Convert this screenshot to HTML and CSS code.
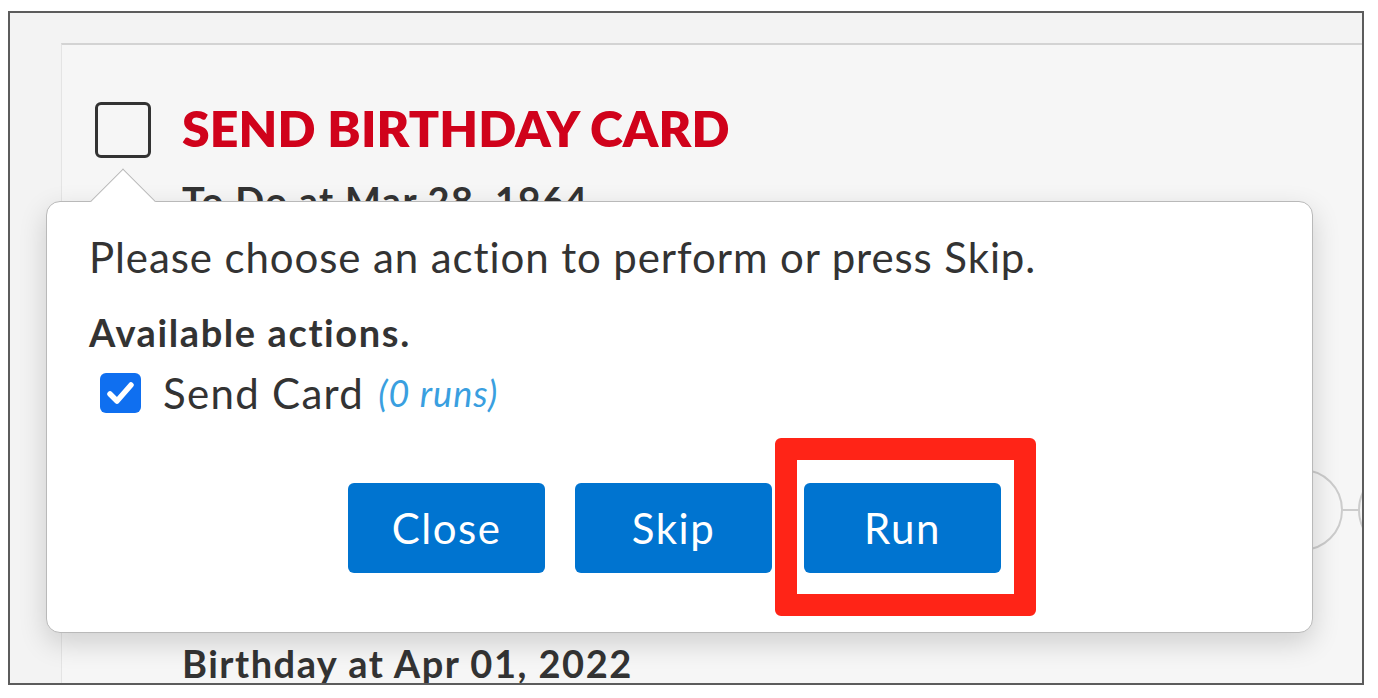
FILE: index.html
```html
<!DOCTYPE html>
<html lang="en">
<head>
<meta charset="utf-8">
<title>Send Birthday Card</title>
<link rel="stylesheet" href="styles.css">
</head>
<body>
<div class="frame">
  <div class="panel">
    <div class="task">
      <div class="task-check"></div>
      <div class="task-body">
        <h1 class="task-title">SEND BIRTHDAY CARD</h1>
        <div class="task-when">To Do at Mar 28, 1964</div>
      </div>
    </div>
    <div class="timeline">
      <span class="node"></span>
      <span class="link"></span>
      <span class="node"></span>
    </div>
    <div class="event">Birthday at Apr 01, 2022</div>
  </div>

  <div class="popover">
    <span class="popover-arrow"></span>
    <p class="prompt">Please choose an action to perform or press Skip.</p>
    <div class="actions-label">Available actions.</div>
    <label class="action">
      <span class="action-check">
        <svg viewBox="0 0 41 40" width="41" height="40">
          <path d="M10 21 L17 28 L31 12" fill="none" stroke="#fff" stroke-width="5.5" stroke-linecap="round" stroke-linejoin="round"/>
        </svg>
      </span>
      <span class="action-name">Send Card</span>
      <span class="action-runs">(0 runs)</span>
    </label>
    <div class="buttons">
      <button class="btn">Close</button>
      <button class="btn">Skip</button>
      <span class="highlight"><button class="btn">Run</button></span>
    </div>
  </div>
</div>
</body>
</html>
```
FILE: styles.css
```css
html, body {
  margin: 0;
  padding: 0;
  background: #ffffff;
}

body {
  font-family: Lato, "Liberation Sans", sans-serif;
  color: #333333;
}

.frame {
  position: relative;
  box-sizing: border-box;
  margin: 11px 0 0 8px;
  width: 1356px;
  height: 674px;
  border: 2px solid #5c5c5c;
  background: #f3f3f3;
  overflow: hidden;
}

.panel {
  box-sizing: border-box;
  margin: 30px 0 0 51px;
  height: 700px;
  border-top: 2px solid #d3d3d3;
  border-left: 1px solid #e4e4e4;
  background: #f6f6f6;
  padding: 57px 0 0 33px;
}

.task {
  display: flex;
  align-items: flex-start;
  gap: 31px;
}

.task-check {
  box-sizing: border-box;
  flex: none;
  width: 56px;
  height: 56px;
  border: 3px solid #333333;
  border-radius: 6px;
}

.task-body {
  padding-top: 1px;
}

.task-title {
  margin: 0;
  font-size: 50px;
  line-height: 50px;
  font-weight: 800;
  color: #d0021b;
  letter-spacing: 0.1px;
}

.task-when {
  margin-top: 26px;
  font-size: 38px;
  line-height: 43px;
  font-weight: 700;
  letter-spacing: 1.3px;
}

.timeline {
  display: flex;
  align-items: center;
  margin: 247px 0 0 1166px;
}

.node {
  flex: none;
  box-sizing: border-box;
  width: 82px;
  height: 82px;
  border: 2px solid #cccccc;
  border-radius: 50%;
}

.link {
  flex: none;
  width: 15px;
  height: 2px;
  background: #cccccc;
}

.event {
  margin: 91px 0 0 87px;
  font-size: 38px;
  line-height: 43px;
  font-weight: 700;
  letter-spacing: 1.5px;
}

.popover {
  position: absolute;
  left: 36px;
  top: 188px;
  box-sizing: border-box;
  width: 1267px;
  height: 432px;
  background: #ffffff;
  border: 1px solid #b9b9b9;
  border-radius: 14px;
  box-shadow: 0 10px 28px rgba(0, 0, 0, 0.16);
  padding: 31px 0 0 42px;
}

.popover-arrow {
  position: absolute;
  left: 53px;
  top: -24px;
  width: 45px;
  height: 45px;
  background: #ffffff;
  border-top: 1px solid #b9b9b9;
  border-left: 1px solid #b9b9b9;
  transform: rotate(45deg);
}

.prompt {
  margin: 0;
  font-size: 42px;
  line-height: 48px;
  font-weight: 400;
  letter-spacing: 0.9px;
}

.actions-label {
  margin-top: 29.5px;
  font-size: 38px;
  line-height: 43px;
  font-weight: 700;
  letter-spacing: 1.6px;
}

.action {
  display: flex;
  align-items: center;
  margin: 11.5px 0 0 11px;
  height: 56px;
}

.action-check {
  display: flex;
  flex: none;
  width: 41px;
  height: 40px;
  background: #0f6ff0;
  border-radius: 6px;
}

.action-name {
  margin-left: 22px;
  font-size: 42px;
  letter-spacing: 1.3px;
}

.action-runs {
  margin-left: 14px;
  font-size: 36px;
  font-style: italic;
  color: #3a9fe0;
  letter-spacing: 1px;
}

.buttons {
  display: flex;
  justify-content: center;
  gap: 30px;
  margin-top: 62px;
  padding-right: 52px;
}

.btn {
  width: 197px;
  height: 90px;
  border: 0;
  border-radius: 6px;
  background: #0074d0;
  color: #ffffff;
  font-family: Lato, "Liberation Sans", sans-serif;
  font-size: 42px;
  font-weight: 400;
  letter-spacing: 1.5px;
  padding: 0;
}

.highlight {
  position: relative;
  display: flex;
  margin-left: 2px;
}

.highlight::after {
  content: "";
  position: absolute;
  left: -29px;
  right: -35px;
  top: -45px;
  bottom: -43px;
  border: 22px solid #ff2417;
  border-radius: 6px;
  pointer-events: none;
}
```
